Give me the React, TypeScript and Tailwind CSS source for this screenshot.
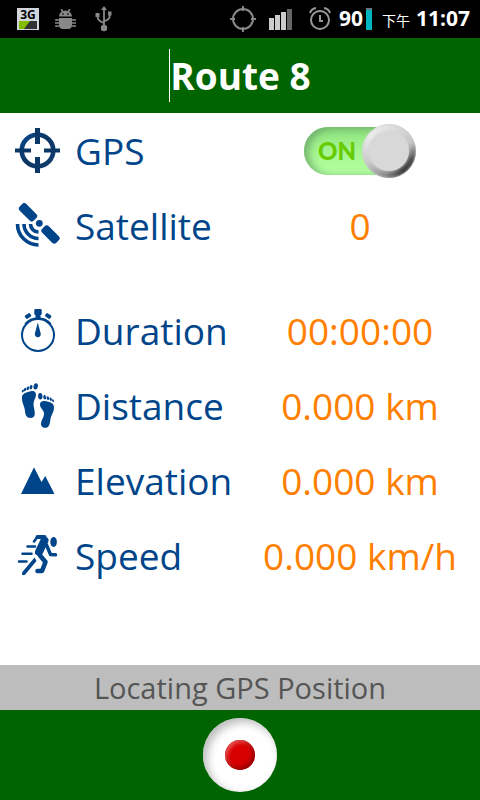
import type { ReactNode } from "react";
import { useState } from "react";

const NAVY = "#00458a";

function Icon({ children }: { children: ReactNode }) {
  return (
    <svg viewBox="0 0 45 45" className="size-[45px] shrink-0" fill={NAVY} aria-hidden="true">
      {children}
    </svg>
  );
}

function GpsIcon() {
  return (
    <Icon>
      <defs>
        <linearGradient id="gps" x1="0" y1="0" x2="1" y2="1">
          <stop offset="0" stopColor="#0a4a8c" />
          <stop offset="0.5" stopColor="#0a3562" />
          <stop offset="1" stopColor="#123f72" />
        </linearGradient>
      </defs>
      <circle cx="22.5" cy="22.5" r="15.8" fill="none" stroke="url(#gps)" strokeWidth="4.6" />
      <path d="M20 0h5v16h-5zM20 29h5v16h-5zM0 20.5h16v4H0zM29 20.5h16v4H29z" fill="#0c3868" />
    </Icon>
  );
}

function SatelliteIcon() {
  return (
    <Icon>
      <rect x="3" y="4.6" width="20" height="9.4" rx="3" transform="rotate(45 13 9.3)" />
      <rect x="25.5" y="26.8" width="20" height="9.4" rx="3" transform="rotate(45 35.5 31.5)" />
      <circle cx="24.3" cy="20.3" r="3.4" />
      <g fill="none" stroke={NAVY} strokeWidth="3.6">
        <path d="M2.5 21A21 21 0 0 0 23.5 42" />
        <path d="M9 21A14.5 14.5 0 0 0 23.5 35.5" />
        <path d="M15.5 21A8 8 0 0 0 23.5 29" />
      </g>
    </Icon>
  );
}

function StopwatchIcon() {
  return (
    <Icon>
      <circle cx="23" cy="27" r="16" fill="none" stroke={NAVY} strokeWidth="2" />
      <path d="M10 16a17 17 0 0 1 26 0" fill="none" stroke={NAVY} strokeWidth="1.5" />
      <rect x="19.3" y="1" width="7.4" height="6" rx="1" />
      <path d="M20.5 6h5v4h-5z" />
      <rect x="10" y="6" width="6" height="4" rx="1" transform="rotate(-35 13 8)" />
      <rect x="30.2" y="6" width="6" height="4" rx="1" transform="rotate(35 33.2 8)" />
      <path d="M22.8 14.5L25.7 25.5a3 3 0 1 1-5.8 0z" />
    </Icon>
  );
}

function FeetIcon() {
  return (
    <Icon>
      <ellipse cx="20.7" cy="3.4" rx="2.2" ry="3.2" transform="rotate(12 20.7 3.4)" />
      <ellipse cx="16" cy="4.2" rx="1.4" ry="2.3" transform="rotate(15 16 4.2)" />
      <ellipse cx="12.8" cy="5.3" rx="1.2" ry="2" transform="rotate(20 12.8 5.3)" />
      <ellipse cx="10" cy="6.6" rx="1.1" ry="1.8" transform="rotate(25 10 6.6)" />
      <ellipse cx="7.9" cy="8" rx="0.9" ry="1.5" transform="rotate(30 7.9 8)" />
      <path d="M7 14C7.5 10 12 9.5 15.5 8.3C19 7.2 21.5 9 21 12.5C20.6 15.5 18.5 17.5 18.5 21C18.5 24.5 20 27.5 19.8 31C19.5 34 17.5 35 15.5 35C11.5 35 10.3 32 10 28C9.6 23 6.5 19.5 7 14z" />
      <ellipse cx="25.3" cy="13.3" rx="2.2" ry="3.2" transform="rotate(-5 25.3 13.3)" />
      <ellipse cx="29.7" cy="14.3" rx="1.4" ry="2.3" transform="rotate(-12 29.7 14.3)" />
      <ellipse cx="32.9" cy="15.1" rx="1.2" ry="2" transform="rotate(-15 32.9 15.1)" />
      <ellipse cx="35.7" cy="16.2" rx="1.1" ry="1.8" transform="rotate(-20 35.7 16.2)" />
      <ellipse cx="38" cy="17.6" rx="0.9" ry="1.5" transform="rotate(-25 38 17.6)" />
      <path d="M25 21C25.5 18 28 17.7 31 18.2C34.5 19 38.7 19.5 39 24C39.2 29 36 32 35.3 37C34.8 41.5 34 44.8 30.2 44.8C26.5 44.8 25.5 42 26.2 39C27 36 29 34 29 30.5C29 27 24.6 25 25 21z" />
    </Icon>
  );
}

function MountainIcon() {
  return (
    <Icon>
      <path d="M6 36L19 9.3L26.5 24L30.3 18L39.5 36z" />
    </Icon>
  );
}

function RunnerIcon() {
  return (
    <Icon>
      <ellipse cx="38.6" cy="9" rx="3.3" ry="5" />
      <g fill="none" stroke={NAVY} strokeLinecap="round" strokeLinejoin="round">
        <path d="M22.5 4h7" strokeWidth="4" />
        <path d="M29.5 7.5L24 19" strokeWidth="8" />
        <path d="M25 22.5l5.500 6.500l-3.500 9h-4.500" strokeWidth="4.600" />
        <path d="M31.500 12l4 9.500l5 .3" strokeWidth="3.400" />
        <path d="M22 4.500l-3 4" strokeWidth="2.600" />
        <path d="M12.500 13.500h7.500M7.500 20.800h9M4 28.500h7.500" strokeWidth="2.600" />
      </g>
      <path d="M19.500 24.500L21.500 28L10 41.800q-2 1.200-3-.6q-.2-1.300.6-2.400z" />
    </Icon>
  );
}

function StatusBar() {
  return (
    <div className="flex h-[38px] items-center justify-between bg-black pr-[10px] pl-[17px] text-white">
      <div className="flex items-center gap-4">
        <div className="flex h-[22px] w-[22px] flex-col border border-gray-300 bg-gray-300">
          <span className="text-center text-[12px] leading-[12px] font-bold text-black">3G</span>
          <svg viewBox="0 0 18 8" className="mx-px h-2" aria-hidden="true">
            <path d="M0 0h18v8H0z" fill="#333" />
            <path d="M0 0h11L5 8H0z" fill="#84bd00" />
          </svg>
        </div>
        <svg viewBox="0 0 21 21" className="size-[21px]" fill="#888" aria-hidden="true">
          <path d="M4 7.5a6.5 6 0 0 1 13 0zM4 9h13v7q0 4-4 4H8q-4 0-4-4z" />
          <path d="M6 0l2 3M15 0l-2 3M4 11H1v-1M4 14H0M4 17H1v1M17 11h3v-1M17 14h4M17 17h3v1" stroke="#888" strokeWidth="1.5" fill="none" />
          <path d="M7 4.5h2v1H7zM12 4.5h2v1h-2z" fill="#000" />
        </svg>
        <svg viewBox="0 0 20 26" className="h-[26px] w-5" fill="#888" aria-hidden="true">
          <path d="M12 0l3 4H9zM3.500 7h4v4h-4zM16 5.500h3.500v4H16z" />
          <circle cx="12" cy="22" r="3.2" />
          <path d="M12 3v19M5.500 10q0 5 6.500 7M17.800 9q0 5-5.800 6" stroke="#888" strokeWidth="1.8" fill="none" />
        </svg>
      </div>
      <div className="flex items-center">
        <svg viewBox="0 0 26 26" className="mr-3 size-[26px]" fill="none" stroke="#888" strokeWidth="2" aria-hidden="true">
          <circle cx="13" cy="13" r="10" />
          <path d="M13 0v5M13 21v5M0 13h5M21 13h5" />
        </svg>
        <svg viewBox="0 0 25 22" className="mr-4 h-[22px] w-[25px]" fill="#ccc" aria-hidden="true">
          <path d="M1 10h5v12H1zM7 7h5v15H7zM13 4h5v18h-5z" />
          <path d="M19 1h5v21h-5z" fill="#666" />
        </svg>
        <svg viewBox="0 0 22 24" className="mr-2 h-6 w-[22px]" fill="none" stroke="#999" strokeWidth="2" aria-hidden="true">
          <circle cx="11" cy="13" r="9" />
          <path d="M11 8v6h3M1 6q1-4 6-5M21 6q-1-4-6-5" />
        </svg>
        <span className="text-[21px] font-bold">90</span>
        <span className="mr-[10px] ml-[3px] h-[22px] w-[6px] border-t-2 border-gray-500 bg-[#00b4c0]" />
        <span className="mr-[6px] pt-1 text-[14px] leading-5">下午</span>
        <span className="text-[21px] font-bold">11:07</span>
      </div>
    </div>
  );
}

function GpsSwitch() {
  const [on, setOn] = useState(true);

  return (
    <label className="relative flex h-[54px] w-28 cursor-pointer items-center">
      <input
        type="checkbox"
        aria-label="GPS"
        className="peer sr-only"
        checked={on}
        onChange={() => setOn(!on)}
      />
      <span className="flex h-12 w-24 items-center rounded-full bg-linear-to-b from-[#8ee47e] via-[#a5f591] to-[#b5ffa2] pl-[14px] font-[Lato,sans-serif] text-[24px] font-black text-[#66cc00] shadow-[inset_4px_2px_8px_#6fae6c]">
        {on ? "ON" : "OFF"}
      </span>
      {/* metal knob */}
      <span className="absolute top-0 right-0 flex size-[54px] items-center justify-center rounded-full bg-[conic-gradient(#e2e2e2,#c4c4c4_70deg,#444_110deg,#333_145deg,#888_190deg,#c8c8c8_240deg,#eee_310deg,#e2e2e2)] shadow-[inset_0_0_3px_#ccc]">
        <span className="size-10 rounded-full bg-[#d8d8d8] shadow-[0_0_5px_#d4d4d4]" />
      </span>
    </label>
  );
}

type RowProps = {
  icon: ReactNode;
  label: string;
  children: ReactNode;
};

function Row({ icon, label, children }: RowProps) {
  return (
    <div className="grid h-[75px] grid-cols-2 items-center">
      <dt className="flex items-center gap-[15px] pl-[15px] text-[#00458a]">
        {icon}
        {label}
      </dt>
      <dd className="flex justify-center whitespace-nowrap text-[#ff8000]">{children}</dd>
    </div>
  );
}

function App() {
  return (
    <div className="flex min-h-screen flex-col bg-white font-['Open_Sans','Noto_Sans_CJK_TC',sans-serif]">
      <StatusBar />

      <header className="flex h-[75px] items-center justify-center bg-[#006400]">
        <input
          type="text"
          aria-label="Route name"
          defaultValue="Route 8"
          className="field-sizing-content h-[53px] border-l border-white text-[37px] font-bold text-white outline-none"
        />
      </header>

      <main className="flex-1 text-[37px] leading-[50px]">
        <dl>
          <Row icon={<GpsIcon />} label="GPS">
            <GpsSwitch />
          </Row>
          <Row icon={<SatelliteIcon />} label="Satellite">0</Row>
        </dl>
        <dl className="mt-[30px]">
          <Row icon={<StopwatchIcon />} label="Duration">00:00:00</Row>
          <Row icon={<FeetIcon />} label="Distance">0.000 km</Row>
          <Row icon={<MountainIcon />} label="Elevation">0.000 km</Row>
          <Row icon={<RunnerIcon />} label="Speed">0.000 km/h</Row>
        </dl>
      </main>

      <p className="bg-[#bdbdbd] text-center text-[29px] leading-[45px] text-[#555]">
        Locating GPS Position
      </p>

      <footer className="flex h-[90px] items-center justify-center bg-[#006400]">
        <button
          type="button"
          aria-label="Record"
          className="flex size-[74px] items-center justify-center rounded-full bg-white shadow-[inset_4px_4px_8px_#bbb]"
        >
          <span className="size-[30px] rounded-full bg-[#d80000] shadow-[inset_-2px_-2px_5px_#8a0000,inset_2px_2px_4px_#ef6060]" />
        </button>
      </footer>
    </div>
  );
}

export default App;
